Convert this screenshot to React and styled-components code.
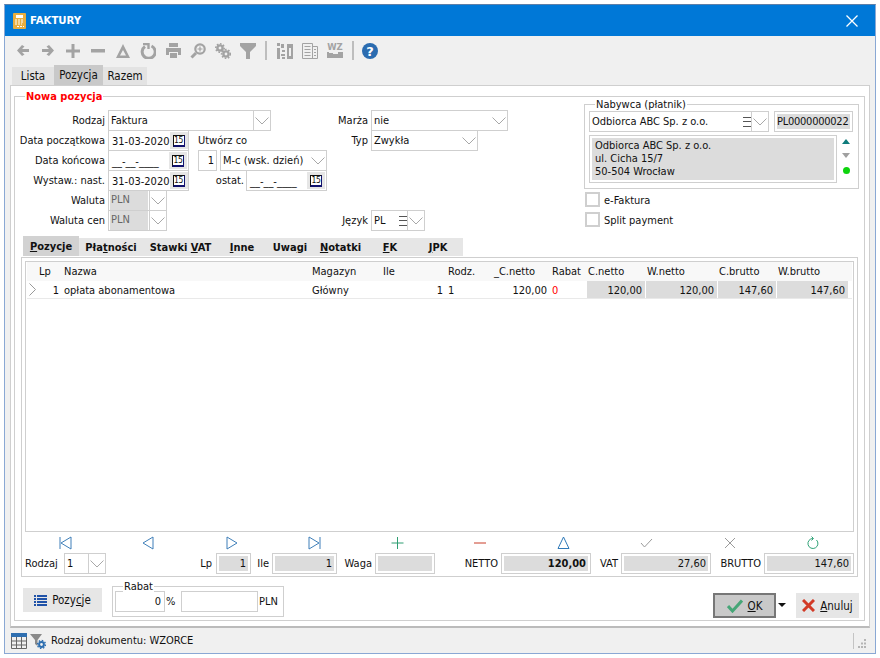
import styled, { createGlobalStyle } from "styled-components";

const GlobalStyle = createGlobalStyle`
  html, body {
    margin: 0;
    background: #fff;
  }
  * {
    box-sizing: border-box;
  }
`;

const Page = styled.div`
  width: 880px;
  height: 658px;
  padding: 4px 4px 4px 4px;
  font-family: "DejaVu Sans Condensed", "DejaVu Sans", sans-serif;
  font-size: 11px;
  color: #111;
`;

const Window = styled.div`
  width: 872px;
  height: 650px;
  display: flex;
  flex-direction: column;
  background: #f0f0f0;
  border: 1px solid #8aa8d4;
  border-top-color: #5d7fa8;
`;

const TitleBar = styled.div`
  height: 31px;
  flex: none;
  background: #0078d7;
  display: flex;
  align-items: center;
  padding: 0 17px 0 8px;
  color: #fff;
  font-weight: 700;
  font-size: 11.3px;
  gap: 4px;
`;

const TitleText = styled.span`
  flex: 1;
`;

const Toolbar = styled.div`
  height: 29px;
  flex: none;
  display: flex;
  align-items: center;
  padding-left: 5px;
`;

const ToolButton = styled.div`
  width: 25px;
  height: 20px;
  flex: none;
  display: flex;
  align-items: center;
  justify-content: center;
`;

const ToolSep = styled.div`
  width: 2px;
  height: 19px;
  flex: none;
  background: #bdbdbd;
  margin: 0 ${(p) => p.$right ?? 5}px 0 5px;
`;

const TopTabs = styled.div`
  height: 20px;
  flex: none;
  display: flex;
  align-items: flex-end;
  padding-left: 7px;
`;

const TopTab = styled.div`
  width: ${(p) => p.$w}px;
  height: ${(p) => (p.$active ? 20 : 18)}px;
  background: ${(p) => (p.$active ? "#c9c9c9" : "#e3e3e3")};
  display: flex;
  align-items: center;
  justify-content: center;
  font-size: 11.5px;
`;

const Panel = styled.div`
  flex: 1;
  margin: 0 5px;
  background: #fff;
  border: 1px solid #cfcfcf;
  border-bottom: 2px solid #bbb;
  padding: 10px 4px 5px 3px;
  display: flex;
`;

const MainFrame = styled.div`
  position: relative;
  flex: 1;
  border: 1px solid #cfcfcf;
  display: flex;
  flex-direction: column;
`;

const RedLegend = styled.span`
  position: absolute;
  left: 10px;
  top: -7px;
  background: #fff;
  padding: 0 1px;
  color: #f00;
  font-weight: 700;
  line-height: 13px;
`;

const TopForm = styled.div`
  height: 139px;
  flex: none;
  display: flex;
  padding-top: 7px;
`;

const LeftCol = styled.div`
  width: 320px;
  padding-top: 6px;
`;

const MidCol = styled.div`
  width: 249px;
  padding-top: 6px;
`;

const RightCol = styled.div`
  width: 275px;
`;

const Row = styled.div`
  height: 20px;
  display: flex;
  align-items: flex-start;
`;

const RowGap = styled.div`
  height: ${(p) => p.$h}px;
`;

const Caption = styled.label`
  width: ${(p) => p.$w}px;
  margin-right: 3px;
  height: 21px;
  line-height: 22px;
  flex: none;
  text-align: ${(p) => (p.$left ? "left" : "right")};
  white-space: nowrap;
`;

const SideLabel = styled.span`
  margin-left: ${(p) => p.$ml}px;
  line-height: 22px;
`;

const FieldBox = styled.div`
  width: ${(p) => p.$w}px;
  height: 21px;
  flex: none;
  margin-left: ${(p) => p.$ml || 0}px;
  border: 1px solid #cfcfcf;
  background: #fff;
  display: flex;
  align-items: center;
  white-space: nowrap;
`;

const FieldValue = styled.span`
  flex: 1;
  min-width: 0;
  height: 100%;
  line-height: 20px;
  padding-left: 2px;
  padding-right: 2px;
  text-align: ${(p) => (p.$right ? "right" : "left")};
  ${(p) =>
    p.$disabled &&
    `
    margin: 1px;
    background: #dcdcdc;
    color: #666;
    line-height: 18px;
    padding-left: 1px;
  `}
`;

const ComboButton = styled.div`
  width: 17px;
  height: 100%;
  flex: none;
  display: flex;
  align-items: center;
  justify-content: center;
  ${(p) => p.$split && "border-left: 1px solid #cfcfcf;"}
`;

const CalButton = styled.div`
  width: 18px;
  height: 17px;
  flex: none;
  margin-right: 1px;
  background: #e6e6e6;
  display: flex;
  align-items: center;
  justify-content: center;
`;

const CalFace = styled.span`
  width: 12px;
  height: 12px;
  border-top: 1px solid #111;
  border-left: 1px solid #111;
  border-right: 1px solid #12126e;
  border-bottom: 2px solid #12126e;
  background: #fff;
  font-size: 8.5px;
  line-height: 9px;
  letter-spacing: -0.4px;
  text-align: center;
  overflow: hidden;
`;

const DateText = styled.span`
  flex: 1;
  padding: 1px 0 0 3px;
  font-size: 11px;
`;

const BuyerFrame = styled.div`
  position: relative;
  height: 85px;
  border: 1px solid #cfcfcf;
  padding: 6px 5px 0 4px;
`;

const PlainLegend = styled.span`
  position: absolute;
  left: ${(p) => p.$left}px;
  top: -7px;
  background: #fff;
  padding: 0 1px;
  line-height: 13px;
`;

const BuyerTop = styled.div`
  display: flex;
  gap: 5px;
  height: 21px;
`;

const ReadOut = styled.div`
  width: ${(p) => p.$w}px;
  height: 21px;
  flex: none;
  margin-left: ${(p) => p.$ml || 0}px;
  border: 1px solid #cfcfcf;
  background: #dcdcdc;
  box-shadow: inset 0 0 0 2px #fff;
  line-height: 20px;
  padding: 0 4px;
  text-align: right;
  font-weight: ${(p) => (p.$bold ? 700 : 400)};
`;

const CodeOut = styled(ReadOut)`
  text-align: left;
  padding: 0 2px;
  letter-spacing: -0.25px;
  white-space: nowrap;
`;

const BuyerBottom = styled.div`
  display: flex;
  margin-top: 3px;
`;

const AddressBox = styled.div`
  width: 248px;
  height: 48px;
  flex: none;
  border: 1px solid #cfcfcf;
  background: #dcdcdc;
  box-shadow: inset 0 0 0 2px #fff;
  padding: 3px 5px;
  line-height: 13px;
`;

const Marks = styled.div`
  width: 18px;
  flex: none;
  padding-top: 4px;
  display: flex;
  flex-direction: column;
  align-items: center;
  gap: 9px;
`;

const Dot = styled.span`
  width: 7px;
  height: 7px;
  border-radius: 50%;
  background: #0ed40e;
`;

const CheckRow = styled.div`
  height: 20px;
  display: flex;
  align-items: center;
  gap: 4px;
  padding-left: 1px;
  &:first-of-type {
    margin-top: 6px;
  }
`;

const CheckBox = styled.span`
  width: 15px;
  height: 15px;
  border: 2px solid #cfcfcf;
  background: #fff;
`;

const CheckText = styled.span`
  padding-top: 2px;
`;

const PageTabs = styled.div`
  height: 20px;
  width: 440px;
  margin: 0 0 1px 8px;
  flex: none;
  display: flex;
  align-items: flex-end;
  background: linear-gradient(#fff 2px, #e6e6e6 2px);
`;

const PageTab = styled.div`
  width: ${(p) => p.$w}px;
  height: ${(p) => (p.$active ? 20 : 18)}px;
  background: ${(p) => (p.$active ? "#d2d2d2" : "transparent")};
  font-weight: 700;
  display: flex;
  align-items: center;
  justify-content: center;
`;

const PageBox = styled.div`
  width: 837px;
  height: 320px;
  margin-left: 6px;
  flex: none;
  border: 1px solid #cfcfcf;
  padding: 3px 3px 0 3px;
  display: flex;
  flex-direction: column;
`;

const GridBox = styled.div`
  height: 271px;
  flex: none;
  border: 1px solid #cfcfcf;
  padding: 0 1px;
`;

const columns = "11px 25px 248px 71px 65px 46px 58px 36px 59px 72px 59px 72px";

const GridHead = styled.div`
  display: grid;
  grid-template-columns: ${columns};
  height: 19px;
  background: #f8f8f8;
`;

const HeadCell = styled.div`
  line-height: 19px;
  padding-left: 1px;
  white-space: nowrap;
`;

const GridRow = styled.div`
  display: grid;
  grid-template-columns: ${columns};
  grid-template-rows: 17px;
  height: 18px;
  border-bottom: 1px solid #e9e9e9;
`;

const Cell = styled.div`
  line-height: 15px;
  padding: 2px ${(p) => (p.$right ? 3 : 1)}px 0 1px;
  margin-right: 1px;
  text-align: ${(p) => (p.$right ? "right" : "left")};
  background: ${(p) => (p.$calc ? "#dcdcdc" : "#fff")};
  color: ${(p) => (p.$red ? "#f00" : "inherit")};
  white-space: nowrap;
`;

const ArrowCell = styled(Cell)`
  display: flex;
  align-items: center;
  justify-content: center;
  padding: 0;
`;

const NavRow = styled.div`
  height: 21px;
  flex: none;
  display: flex;
`;

const NavCell = styled.div`
  flex: 1;
  display: flex;
  align-items: center;
  justify-content: center;
`;

const FootRow = styled.div`
  height: 21px;
  flex: none;
  display: flex;
  align-items: flex-start;
`;

const BottomBar = styled.div`
  flex: 1;
  display: flex;
  align-items: flex-start;
  padding: 0 5px 0 8px;
`;

const FlatButton = styled.div`
  width: ${(p) => p.$w}px;
  height: ${(p) => p.$h}px;
  margin-top: ${(p) => p.$mt}px;
  flex: none;
  background: ${(p) => (p.$default ? "#c9c9c9" : "#e6e6e6")};
  border: ${(p) => (p.$default ? "2px solid #777" : "none")};
  display: flex;
  align-items: center;
  justify-content: center;
  gap: 5px;
  font-size: 11.5px;
`;

const RabatFrame = styled.div`
  position: relative;
  width: 172px;
  height: 31px;
  margin: 9px 0 0 10px;
  flex: none;
  border: 1px solid #cfcfcf;
  padding: 4px 0 0 2px;
  display: flex;
  align-items: flex-start;
`;

const PlainInput = styled.div`
  width: ${(p) => p.$w}px;
  height: 21px;
  flex: none;
  border: 1px solid #cfcfcf;
  line-height: 20px;
  padding: 0 3px;
  text-align: right;
`;

const Unit = styled.span`
  width: ${(p) => p.$w}px;
  flex: none;
  line-height: 22px;
  padding-left: 1px;
`;

const Spacer = styled.div`
  flex: 1;
`;

const Caret = styled.span`
  margin: 26px 10px 0 2px;
  flex: none;
  width: 0;
  height: 0;
  border-left: 4px solid transparent;
  border-right: 4px solid transparent;
  border-top: 4px solid #111;
`;

const StatusBar = styled.div`
  height: 25px;
  flex: none;
  display: flex;
  align-items: center;
  padding: 0 8px 0 6px;
  gap: 3px;
`;

const StatusText = styled.span`
  flex: 1;
  margin-left: 2px;
`;

const Grip = styled.div`
  width: 14px;
  height: 16px;
  border-left: 1px solid #c4c4c4;
  display: flex;
  align-items: flex-end;
  justify-content: flex-end;
`;

const grey = "#a3a3a3";

const Chevron = () => (
  <svg width="14" height="8" viewBox="0 0 14 8" fill="none" stroke="#a8a8a8">
    <path d="M0.5 0.5 L7 7 L13.5 0.5" />
  </svg>
);

const Burger = () => (
  <svg width="8" height="10" viewBox="0 0 8 10" stroke="#555">
    <path d="M0 .5H8M0 4.5H8M0 9.5H8" />
  </svg>
);

const Calendar = () => (
  <CalButton>
    <CalFace>15</CalFace>
  </CalButton>
);

const DateField = ({ value, ml }) => (
  <FieldBox $w={81} $ml={ml}>
    <DateText>{value}</DateText>
    <Calendar />
  </FieldBox>
);

const Combo = ({ w, value, ml, split, disabled, burger }) => (
  <FieldBox $w={w} $ml={ml}>
    <FieldValue $disabled={disabled}>{value}</FieldValue>
    {burger && <Burger />}
    <ComboButton $split={split}>
      <Chevron />
    </ComboButton>
  </FieldBox>
);

const TitleIcon = () => (
  <svg width="13" height="16" viewBox="0 0 13 16">
    <rect width="13" height="16" rx="1" fill="#e9ae3f" />
    <path d="M3 2H10V5H3Z" fill="#fff" />
    <path d="M2 7H11M2 9H11M2 11H9M4 13.5H11" stroke="#fff" strokeDasharray="2 1" />
  </svg>
);

const CloseIcon = () => (
  <svg width="12" height="12" viewBox="0 0 12 12" stroke="#fff" strokeWidth="1.3">
    <path d="M.5 .5L11.5 11.5M11.5 .5L.5 11.5" />
  </svg>
);

const tools = [
  <path key="a" d="M5 0L7.5 1.5L5 4H12V7H5L7.5 9.5L5 11L0 5.5Z" fill={grey} />,
  <path key="b" d="M7 0L4.5 1.5L7 4H0V7H7L4.500 9.5L7 11L12 5.5Z" fill={grey} />,
  <path key="c" d="M5.5 0H8.5V5.5H14V8.5H8.5V14H5.5V8.5H0V5.5H5.5Z" fill={grey} />,
  <path key="d" d="M0 5H14V8.5H0Z" fill={grey} />,
  <path key="e" fillRule="evenodd" d="M7 0L14 14H0ZM7 6L4 11.5H10Z" fill={grey} />,
  <g key="f" fill="none" stroke={grey} strokeWidth="3">
    <path d="M5 3.5A6.5 6.5 0 1 0 11.5 3" />
    <path d="M3 1L8.500 1L8.500 6" strokeWidth="2.4" />
  </g>,
  <g key="g" fill={grey}>
    <path d="M4 0H13V4H4Z" />
    <path fillRule="evenodd" d="M1 5H16V12H13V9H4V12H1Z" />
    <path d="M5 10H12V15H5Z" />
  </g>,
  <g key="h" fill="none" stroke={grey}>
    <circle cx="10" cy="6" r="4.7" strokeWidth="2.2" />
    <path d="M6 10L1.5 14.5" strokeWidth="3" />
    <path d="M7.500 6H12.500M10 3.500V8.500" strokeWidth="1.2" />
  </g>,
  <g key="i" fill="none" stroke={grey}>
    <circle cx="5" cy="5" r="2.6" strokeWidth="2.4" />
    <circle cx="5" cy="5" r="4.2" strokeWidth="1.6" strokeDasharray="1.6 1.6" />
    <circle cx="11" cy="11" r="2.6" strokeWidth="2.4" />
    <circle cx="11" cy="11" r="4.4" strokeWidth="1.6" strokeDasharray="1.6 1.6" />
  </g>,
  <path key="j" d="M0 0H16V3L10 9V16H6V9L0 3Z" fill={grey} />,
];

const toolsRight = [
  <g key="k" fill={grey}>
    <path d="M0 0H3V3H0ZM4 1H7V5H4ZM0 5H3V16H0ZM5 7H8V9H5ZM4 11H8V13H4ZM5 14H8V16H5Z" />
    <path d="M10 1H16V16H10ZM12 5V13H14V5Z" fillRule="evenodd" />
  </g>,
  <g key="l" fill="none" stroke={grey}>
    <path d="M.5 .5H10.5V15.5H.5Z" />
    <path d="M11 3.5H15.5V15.5H8" />
    <path d="M2.5 3.5H8.5M2.5 6.5H8.5M2.5 9.5H8.5M2.5 12.5H8.5M12 6.5H14M12 9.5H14M12 12.5H14" />
  </g>,
  <g key="m" fill={grey}>
    <text x="8" y="7" textAnchor="middle" fontSize="8.5" fontWeight="700" fontFamily="DejaVu Sans">WZ</text>
    <path d="M0 9H2V10H6V11H11V9H16V15H0Z" />
  </g>,
];

const Tool = ({ children, w = 16, h = 16 }) => (
  <ToolButton>
    <svg width={w} height={h} viewBox={`0 0 ${w} ${h}`}>
      {children}
    </svg>
  </ToolButton>
);

const HelpIcon = () => (
  <svg width="16" height="16" viewBox="0 0 16 16">
    <circle cx="8" cy="8" r="8" fill="#2b6cb0" />
    <text x="8" y="12.5" textAnchor="middle" fontSize="13" fontWeight="700" fill="#fff" fontFamily="DejaVu Sans">?</text>
  </svg>
);

const navIcons = [
  { c: "#3f7fb9", d: "M1 1V13M12 1V13L2 7Z" },
  { c: "#3f7fb9", d: "M11 1V13L1 7Z" },
  { c: "#3f7fb9", d: "M2 1V13L12 7Z" },
  { c: "#3f7fb9", d: "M1 1V13L11 7ZM12 1V13" },
  { c: "#2f9e72", d: "M6.5 1V13M.5 7H12.5" },
  { c: "#c83c28", d: "M0 7H12" },
  { c: "#2f79b8", d: "M6.5 1L12 12.5H1Z" },
  { c: "#9a9a9a", d: "M1 7L4.5 11L12 3" },
  { c: "#9a9a9a", d: "M2 2L12 12M12 2L2 12" },
  { c: "#2fa277", d: "M7 2.5A5 5 0 1 0 10.5 4M5.5 .5L7.5 2.5L5.5 4.5" },
];

const NavIcon = ({ c, d }) => (
  <svg width="14" height="14" viewBox="0 0 14 14" fill="none" stroke={c}>
    <path d={d} />
  </svg>
);

const ListIcon = () => (
  <svg width="13" height="11" viewBox="0 0 13 11" fill="#1f52a8">
    <path d="M0 0H2V2H0ZM3 0H13V2H3ZM0 3H2V5H0ZM3 3H13V5H3ZM0 6H2V8H0ZM3 6H13V8H3ZM0 9H2V11H0ZM3 9H13V11H3Z" />
  </svg>
);

const OkIcon = () => (
  <svg width="16" height="14" viewBox="0 0 16 14" fill="none" stroke="#46a677" strokeWidth="3">
    <path d="M1 7L5.5 12L15 1.5" />
  </svg>
);

const CancelIcon = () => (
  <svg width="13" height="13" viewBox="0 0 13 13" stroke="#d23a26" strokeWidth="3">
    <path d="M1 1L12 12M12 1L1 12" />
  </svg>
);

const TableIcon = () => (
  <svg width="16" height="16" viewBox="0 0 16 16" fill="none">
    <path d="M0 0H16V4H0Z" fill="#2f6fb0" />
    <path d="M.5 4V15.5H15.5V4M.5 8H15.5M.5 12H15.5M5.5 4V15.5M10.5 4V15.5" stroke="#666" />
  </svg>
);

const FilterGearIcon = () => (
  <svg width="16" height="16" viewBox="0 0 16 16">
    <path d="M0 1H12L7.5 7V13L5 11V7Z" fill="#8a8a8a" />
    <circle cx="11.5" cy="11.5" r="2.4" fill="none" stroke="#2f6fb0" strokeWidth="2" />
    <circle cx="11.5" cy="11.5" r="4" fill="none" stroke="#2f6fb0" strokeWidth="1.4" strokeDasharray="1.5 1.6" />
  </svg>
);

const GripIcon = () => (
  <svg width="10" height="10" viewBox="0 0 10 10" fill="#b5b5b5">
    <path d="M7 0H9V2H7ZM4 3.500H6V5.500H4ZM7 3.500H9V5.500H7ZM1 7H3V9H1ZM4 7H6V9H4ZM7 7H9V9H7Z" />
  </svg>
);

const Triangle = ({ up, color }) => (
  <svg width="8" height="5" viewBox="0 0 8 5" fill={color}>
    <path d={up ? "M4 0L8 5H0Z" : "M0 0H8L4 5Z"} />
  </svg>
);

const pageTabs = [
  { w: 56, label: <><u>P</u>ozycje</>, active: true },
  { w: 64, label: <>Pła<u>t</u>ności</> },
  { w: 75, label: <>Stawki <u>V</u>AT</> },
  { w: 48, label: <><u>I</u>nne</> },
  { w: 48, label: <>Uwa<u>g</u>i</> },
  { w: 53, label: <><u>N</u>otatki</> },
  { w: 46, label: <><u>F</u>K</> },
  { w: 50, label: <><u>J</u>PK</> },
];

const headers = ["", "Lp", "Nazwa", "Magazyn", "Ile", "Rodz.", "_C.netto", "Rabat", "C.netto", "W.netto", "C.brutto", "W.brutto"];

function App() {
  return (
    <Page>
      <GlobalStyle />
      <Window>
        <TitleBar>
          <TitleIcon />
          <TitleText>FAKTURY</TitleText>
          <CloseIcon />
        </TitleBar>

        <Toolbar>
          {tools.map((t, i) => (
            <Tool key={i} w={i < 2 ? 12 : i < 5 ? 14 : 16} h={i < 2 ? 11 : i < 5 ? 14 : 16}>
              {t}
            </Tool>
          ))}
          <ToolSep />
          {toolsRight.map((t, i) => (
            <Tool key={i}>{t}</Tool>
          ))}
          <ToolSep $right={3} />
          <ToolButton>
            <HelpIcon />
          </ToolButton>
        </Toolbar>

        <TopTabs>
          <TopTab $w={42}>Lista</TopTab>
          <TopTab $w={49} $active>Pozycja</TopTab>
          <TopTab $w={44}>Razem</TopTab>
        </TopTabs>

        <Panel>
          <MainFrame>
            <RedLegend>Nowa pozycja</RedLegend>
            <TopForm>
              <LeftCol>
                <Row>
                  <Caption $w={90}>Rodzaj</Caption>
                  <Combo w={163} value="Faktura" split />
                </Row>
                <Row>
                  <Caption $w={90}>Data początkowa</Caption>
                  <DateField value="31-03-2020" />
                  <SideLabel $ml={9}>Utwórz co</SideLabel>
                </Row>
                <Row>
                  <Caption $w={90}>Data końcowa</Caption>
                  <DateField value="__-__-____" />
                  <FieldBox $w={19} $ml={9}>
                    <FieldValue $right>1</FieldValue>
                  </FieldBox>
                  <Combo w={107} ml={3} value="M-c (wsk. dzień)" />
                </Row>
                <Row>
                  <Caption $w={90}>Wystaw.: nast.</Caption>
                  <DateField value="31-03-2020" />
                  <Caption $w={55}>ostat.</Caption>
                  <DateField value="__-__-____" ml={-1} />
                </Row>
                <Row>
                  <Caption $w={90}>Waluta</Caption>
                  <Combo w={59} value="PLN" disabled split />
                </Row>
                <Row>
                  <Caption $w={90}>Waluta cen</Caption>
                  <Combo w={59} value="PLN" disabled split />
                </Row>
              </LeftCol>

              <MidCol>
                <Row>
                  <Caption $w={33}>Marża</Caption>
                  <Combo w={137} value="nie" />
                </Row>
                <Row>
                  <Caption $w={33}>Typ</Caption>
                  <Combo w={107} value="Zwykła" />
                </Row>
                <RowGap $h={60} />
                <Row>
                  <Caption $w={33}>Język</Caption>
                  <Combo w={54} value="PL" burger split />
                </Row>
              </MidCol>

              <RightCol>
                <BuyerFrame>
                  <PlainLegend $left={10}>Nabywca (płatnik)</PlainLegend>
                  <BuyerTop>
                    <Combo w={180} value="Odbiorca ABC Sp. z o.o." burger split />
                    <CodeOut $w={79}>PL0000000022</CodeOut>
                  </BuyerTop>
                  <BuyerBottom>
                    <AddressBox>
                      Odbiorca ABC Sp. z o.o.
                      <br />
                      ul. Cicha 15/7
                      <br />
                      50-504 Wrocław
                    </AddressBox>
                    <Marks>
                      <Triangle up color="#0f7c7c" />
                      <Triangle color="#a0a0a0" />
                      <Dot />
                    </Marks>
                  </BuyerBottom>
                </BuyerFrame>
                <CheckRow>
                  <CheckBox />
                  <CheckText>e-Faktura</CheckText>
                </CheckRow>
                <CheckRow>
                  <CheckBox />
                  <CheckText>Split payment</CheckText>
                </CheckRow>
              </RightCol>
            </TopForm>

            <PageTabs>
              {pageTabs.map((t, i) => (
                <PageTab key={i} $w={t.w} $active={t.active}>
                  <span>{t.label}</span>
                </PageTab>
              ))}
            </PageTabs>

            <PageBox>
              <GridBox>
                <GridHead>
                  {headers.map((h, i) => (
                    <HeadCell key={i}>{h}</HeadCell>
                  ))}
                </GridHead>
                <GridRow>
                  <ArrowCell>
                    <svg width="7" height="13" viewBox="0 0 7 13" fill="none" stroke="#999">
                      <path d="M.5 .5L6.500 6.500L.5 12.500" />
                    </svg>
                  </ArrowCell>
                  <Cell $right>1</Cell>
                  <Cell>opłata abonamentowa</Cell>
                  <Cell>Główny</Cell>
                  <Cell $right>1</Cell>
                  <Cell>1</Cell>
                  <Cell $right>120,00</Cell>
                  <Cell $red>0</Cell>
                  <Cell $right $calc>120,00</Cell>
                  <Cell $right $calc>120,00</Cell>
                  <Cell $right $calc>147,60</Cell>
                  <Cell $right $calc>147,60</Cell>
                </GridRow>
              </GridBox>

              <NavRow>
                {navIcons.map((n, i) => (
                  <NavCell key={i}>
                    <NavIcon c={n.c} d={n.d} />
                  </NavCell>
                ))}
              </NavRow>

              <FootRow>
                <Caption $w={36} $left>Rodzaj</Caption>
                <Combo w={42} value="1" split />
                <Caption $w={106}>Lp</Caption>
                <ReadOut $w={35} $ml={1}>1</ReadOut>
                <Caption $w={18}>Ile</Caption>
                <ReadOut $w={65}>1</ReadOut>
                <Caption $w={35}>Waga</Caption>
                <ReadOut $w={60} />
                <Caption $w={63}>NETTO</Caption>
                <ReadOut $w={90} $bold>120,00</ReadOut>
                <Caption $w={27}>VAT</Caption>
                <ReadOut $w={90}>27,60</ReadOut>
                <Caption $w={50}>BRUTTO</Caption>
                <ReadOut $w={90}>147,60</ReadOut>
              </FootRow>
            </PageBox>

            <BottomBar>
              <FlatButton $w={79} $h={24} $mt={11}>
                <ListIcon />
                <span>Pozy<u>c</u>je</span>
              </FlatButton>
              <RabatFrame>
                <PlainLegend $left={10}>Rabat</PlainLegend>
                <PlainInput $w={50}>0</PlainInput>
                <Unit $w={16}>%</Unit>
                <PlainInput $w={77} />
                <Unit $w={25}>PLN</Unit>
              </RabatFrame>
              <Spacer />
              <FlatButton $w={63} $h={25} $mt={16} $default>
                <OkIcon />
                <span><u>O</u>K</span>
              </FlatButton>
              <Caret />
              <FlatButton $w={63} $h={25} $mt={16}>
                <CancelIcon />
                <span><u>A</u>nuluj</span>
              </FlatButton>
            </BottomBar>
          </MainFrame>
        </Panel>

        <StatusBar>
          <TableIcon />
          <FilterGearIcon />
          <StatusText>Rodzaj dokumentu: WZORCE</StatusText>
          <Grip>
            <GripIcon />
          </Grip>
        </StatusBar>
      </Window>
    </Page>
  );
}

export default App;
